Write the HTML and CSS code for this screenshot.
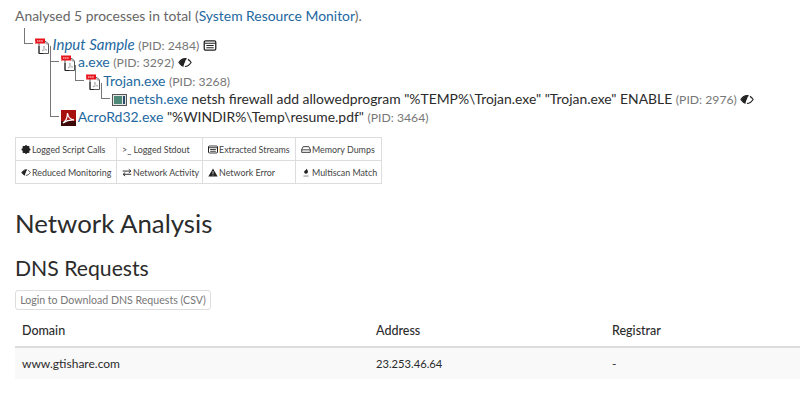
FILE: index.html
```html
<!DOCTYPE html>
<html lang="en">

<head>
    <meta charset="UTF-8">
    <title>Network Analysis</title>
    <link rel="stylesheet" href="styles.css">
</head>

<body>
    <svg class="sprites" width="0" height="0">
        <symbol id="pdf" viewBox="0 0 15 16">
            <path d="M4 3.500h7l2.500 2.500v9.500h-9.500z" fill="#fff" stroke="#555"/>
            <path d="M4 8v7.500h4" fill="none" stroke="#222"/>
            <path d="M11 3.500v2.500h2.500" fill="none" stroke="#999"/>
            <path d="M7 13c1.500-1.500 2-3 1.800-5 .4 2 1.300 3.500 3 4-1.800-.2-3.300 0-4.800 1z" fill="none" stroke="#999" stroke-width=".7"/>
            <path d="M0 .5h10v5h-9l-.5 1z" fill="#e8121a"/>
            <path d="M2 3h6" stroke="#fff" stroke-width="1" stroke-dasharray="1.500 .6"/>
        </symbol>
        <symbol id="reduced" viewBox="0 0 16 12">
            <path d="M1 6c2-3 4.500-4.500 7-4.500s5 1.500 7 4.500c-2 3-4.500 4.500-7 4.500s-5-1.500-7-4.500z" fill="none" stroke="#222" stroke-width="1.300"/>
            <path d="M1.500 6c1.500-2 4-4.500 8-4.500l-3.500 9c-2-.6-3-2.500-4.500-4.500z" fill="#222"/>
            <path d="M11.500 0l-5 12" stroke="#fff" stroke-width="1.600"/>
        </symbol>
        <symbol id="monitor" viewBox="0 0 14 12">
            <rect x=".7" y="1" width="12.600" height="10" rx="1.500" fill="none" stroke="#222" stroke-width="1.400"/>
            <path d="M1 3.500h12M3 6h8M3 8.500h8" stroke="#222" stroke-width="1.200"/>
        </symbol>
    </svg>

    <p class="summary">Analysed 5 processes in total (<a href="#">System Resource Monitor</a>).</p>

    <ul class="tree">
        <li>
            <div class="proc">
                <svg class="icon"><use href="#pdf"/></svg>
                <a class="sample" href="#">Input Sample</a> <span class="pid">(PID: 2484)</span>
                <svg class="mark"><use href="#monitor"/></svg>
            </div>
            <ul>
                <li>
                    <div class="proc">
                        <svg class="icon"><use href="#pdf"/></svg>
                        <a href="#">a.exe</a> <span class="pid">(PID: 3292)</span>
                        <svg class="mark"><use href="#reduced"/></svg>
                    </div>
                    <ul>
                        <li>
                            <div class="proc">
                                <svg class="icon"><use href="#pdf"/></svg>
                                <a href="#">Trojan.exe</a> <span class="pid">(PID: 3268)</span>
                            </div>
                            <ul>
                                <li>
                                    <div class="proc">
                                        <svg class="icon" viewBox="0 0 15 14">
                                            <rect x=".5" y="1.500" width="14" height="11" fill="#e4e8e4" stroke="#555"/>
                                            <rect x="2" y="3" width="8" height="8" fill="#4f8a78"/>
                                            <rect x="11" y="3" width="2" height="8" fill="#2a4a6a"/>
                                        </svg>
                                        <a href="#">netsh.exe</a> <span class="cmd">netsh firewall add allowedprogram "%TEMP%\Trojan.exe" "Trojan.exe" ENABLE</span> <span class="pid">(PID: 2976)</span>
                                        <svg class="mark"><use href="#reduced"/></svg>
                                    </div>
                                </li>
                            </ul>
                        </li>
                    </ul>
                </li>
                <li>
                    <div class="proc">
                        <svg class="icon" viewBox="0 0 15 16">
                            <rect width="15" height="16" fill="#a80f0f"/>
                            <rect y="11" width="15" height="5" fill="#3c0707"/>
                            <path d="M2 13c3-2 4.500-5 4.500-10 .5 4 3 6.500 6.500 7-4-.2-7.500.6-11 3z" fill="none" stroke="#fff" stroke-width="1.300"/>
                        </svg>
                        <a href="#">AcroRd32.exe</a> <span class="cmd">"%WINDIR%\Temp\resume.pdf"</span> <span class="pid">(PID: 3464)</span>
                    </div>
                </li>
            </ul>
        </li>
    </ul>

    <table class="legend">
        <tr>
            <td class="cell-a">
                <svg class="glyph" viewBox="0 0 12 12"><circle cx="6" cy="6" r="3.500" fill="none" stroke="#222" stroke-width="3"/><path d="M6 0v12M0 6h12M1.800 1.800l8.400 8.400M10.200 1.800l-8.400 8.400" stroke="#222" stroke-width="1.800"/></svg>Logged Script Calls
            </td>
            <td class="cell-b"><span class="prompt">&gt;_</span> Logged Stdout</td>
            <td class="cell-c"><svg class="glyph" viewBox="0 0 14 12"><use href="#monitor"/></svg>Extracted Streams</td>
            <td class="cell-b">
                <svg class="glyph" viewBox="0 0 14 12"><path d="M3 2h8l2 4v4H1V6zM1 6.500h12" fill="none" stroke="#222" stroke-width="1.200"/></svg>Memory Dumps
            </td>
        </tr>
        <tr>
            <td><svg class="glyph" viewBox="0 0 16 12"><use href="#reduced"/></svg>Reduced Monitoring</td>
            <td>
                <svg class="glyph" viewBox="0 0 14 12"><path d="M1 4h11M9.500 1.500l3 2.500-3 2.500M13 8.500H2M4.500 6l-3 2.500 3 2.500" fill="none" stroke="#222" stroke-width="1.300"/></svg>Network Activity
            </td>
            <td><svg class="glyph" viewBox="0 0 14 12"><path d="M7 .5l6.500 11H.5z" fill="#222"/><path d="M7 4v4M7 9v1.300" stroke="#fff"/></svg>Network Error</td>
            <td>
                <svg class="glyph" viewBox="0 0 14 14"><path d="M8 1c1 2 2 3 2 5a3 3 0 0 1-6 0c0-1.500 3-3 4-5z" fill="#222"/><path d="M3 12.500h8" stroke="#888" stroke-width="1.500"/></svg>Multiscan Match
            </td>
        </tr>
    </table>

    <h1>Network Analysis</h1>
    <h2>DNS Requests</h2>
    <button class="btn">Login to Download DNS Requests (CSV)</button>

    <table class="dns">
        <tr>
            <th class="col-domain">Domain</th>
            <th class="col-addr">Address</th>
            <th>Registrar</th>
        </tr>
        <tr>
            <td>www.gtishare.com</td>
            <td class="ip">23.253.46.64</td>
            <td>-</td>
        </tr>
    </table>
</body>

</html>
```

FILE: styles.css
```css
body {
    font-family: Lato, "Open Sans", sans-serif;
    font-size: 14px;
    color: #2b2b2b;
    margin: 0;
    padding: 7px 0 0 15px;
    overflow: hidden;
}

a {
    color: #23689f;
    text-decoration: none;
}

.sprites {
    position: absolute;
}

.summary {
    margin: 0 0 10px;
    font-size: 13.900px;
    line-height: 18px;
    color: #666;
}

.tree,
.tree ul {
    list-style: none;
    margin: 0;
    padding: 0;
}

.tree {
    padding-left: 20px;
}

.tree ul {
    padding-left: 25.500px;
}

.tree li {
    position: relative;
}

/* connector lines */
.tree li::before {
    content: "";
    position: absolute;
    left: -11px;
    top: -7px;
    width: 8px;
    height: 15px;
    border-left: 1px solid #777;
    border-bottom: 1px solid #777;
}

.tree li + li::before {
    top: -48px;
    height: 56px;
}

.proc {
    height: 18.250px;
    line-height: 18px;
    white-space: nowrap;
    font-size: 14px;
}

.icon {
    width: 15px;
    height: 16px;
    margin-right: -1px;
    vertical-align: -4px;
}

.sample {
    font-style: italic;
    font-size: 15px;
}

.cmd {
    font-size: 13.900px;
}

.pid {
    color: #777;
    font-size: 12.200px;
}

.mark {
    width: 14px;
    height: 11px;
    vertical-align: -1px;
}

.legend {
    border-collapse: collapse;
    table-layout: fixed;
    width: 366px;
    margin-top: 11px;
    font-size: 8.900px;
    color: #444;
}

.legend td {
    box-sizing: border-box;
    border: 1px solid #ddd;
    height: 23px;
    padding: 0 0 0 5px;
    white-space: nowrap;
}

.cell-a {
    width: 101px;
}

.cell-b {
    width: 86px;
}

.cell-c {
    width: 93px;
}

.glyph {
    width: 10px;
    height: 9px;
    margin-right: 1px;
    vertical-align: -1px;
}

h1 {
    font-size: 25.800px;
    font-weight: 400;
    line-height: 34px;
    margin: 22px 0 0;
}

h2 {
    font-size: 21.200px;
    font-weight: 400;
    line-height: 28px;
    margin: 14px 0 0;
}

.btn {
    display: block;
    font: inherit;
    font-size: 10.600px;
    color: #777;
    background: #fff;
    border: 1px solid #ddd;
    border-radius: 3px;
    width: 196px;
    height: 20px;
    padding: 0;
    white-space: nowrap;
    margin-top: 8px;
}

.dns {
    width: 785px;
    border-collapse: collapse;
    margin-top: 4px;
    font-size: 12px;
}

.dns th {
    text-align: left;
    font-size: 12.500px;
    font-weight: 500;
    height: 32px;
    padding: 0 7px;
    border-bottom: 2px solid #ddd;
}

.dns td {
    height: 31px;
    padding: 0 7px;
    background: #f9f9f9;
}

.dns .ip {
    font-size: 11.200px;
}

.col-domain {
    width: 340px;
}

.col-addr {
    width: 222px;
}
```
